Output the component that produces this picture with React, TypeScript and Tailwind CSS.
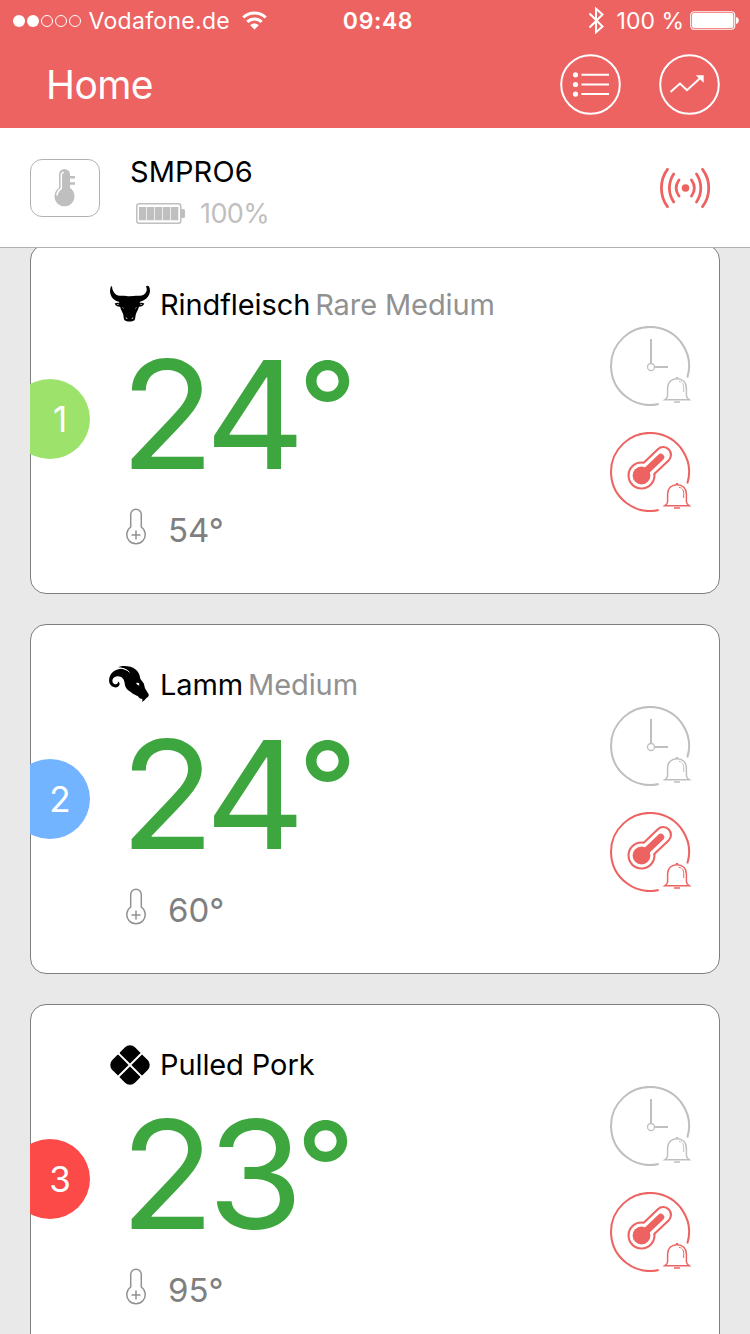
import type { ReactNode } from 'react';

interface Probe {
  channel: number;
  badge: string;
  icon: ReactNode;
  meat: string;
  doneness?: string;
  current: number;
  target: number;
}

function BullIcon() {
  return (
    <svg viewBox="0 0 40 40" className="h-10 w-10">
      <path d="M1.300 2C-.4 5-.5 10 2 13.400c1.800 2.300 4.200 3.600 7 4.300l.3 1.300c-1.600-.3-3.100-.1-4.600.5.900 2.200 2.900 3.400 5.400 3.300.5 2.600 1.900 4.700 2.900 7 .7 2 .4 3.700 1.100 5.700.9 1.500 2.600 2 5.400 2s4.500-.5 5.400-2c.7-2 .4-3.700 1.100-5.700 1-2.300 2.400-4.400 2.900-7 2.500.1 4.500-1.100 5.400-3.300-1.500-.6-3-.8-4.600-.5l.3-1.300c2.800-.7 5.700-2 7.700-4.600 2.600-3.200 2.900-7.800 1.300-10.500-.8-1.200-2.400-1.200-3-.2 1.200 2.600 1 5-.9 7-1.900 2-5 2.500-8.300 2.400-2.400-.1-4.600.5-7.100.5s-5.200-.6-7.300-.5c-3 .1-5.200-.3-7-1.900-2.100-1.900-3.300-4.600-3.300-7.200z" />
      <path d="M6.800 20.600l2.200-.4M32.200 20.600l-2.200-.4M12.500 23.500l1.200 1M26.500 23.500l-1.200 1" stroke="#fff" strokeWidth="0.600" fill="none" />
      <path d="M15.800 33.800l1.500.8M23.200 33.800l-1.500.8" stroke="#fff" strokeWidth="0.900" />
    </svg>
  );
}

function RamIcon() {
  return (
    <svg viewBox="0 0 40 40" className="h-10 w-10 overflow-visible">
      <path d="M8.200 3.300C11 1.800 15.500 1.500 20.500 2.700c4.300 1.200 7.300 4.100 8.700 7.600.8 2 .7 3.600 1.400 4.900l3.200 4.300 1.200 4.800 3.900 6.500c-.2 1.500-1.200 2.700-2.500 3.100l-1.700 2-2.500 2.100.2-2.900c-2-.2-3.300-1.200-4.400-2.900-2.100-.8-4.700-1.900-7.600-4.400-3.300-1.800-5.300-4.300-5.700-8-.2-2.600-1.300-5.500-3.500-6.700-3.600-1.900-7.900-.4-8.700 2.600-.6 2.500 1.100 4.700 3.300 4.600 1.700-.1 2.500-1.400 2-2.700 1.400.4 2.100 1.700 1.700 3.200-.6 2-2.900 3-5.200 2.500C.9 22.500-1.200 19.500-.9 15.800-.5 10 3.900 5.500 9.500 4.900c3.800-.4 7.200.9 9.700 3.200-1.900-2.700-5.700-4.500-11-4.800z" />
      <path d="M8 4.300c4.300-.5 9.200 1 11.500 4" stroke="#fff" strokeWidth="0.900" fill="none" />
      <path d="M26.200 19c1-.6 2.200-.3 2.900.6l.2 1.900c-1.500-.2-2.700-1-3.100-2.500z" fill="#fff" />
    </svg>
  );
}

function PorkIcon() {
  return (
    <svg viewBox="0 0 40 40" className="mt-px h-10 w-10">
      <g transform="rotate(45 20 20)">
        <path d="M19 4H11a7 7 0 0 0-7 7v7q0 1 1 1h14zM21 4h8a7 7 0 0 1 7 7v7q0 1-1 1H21zM19 36h-8a7 7 0 0 1-7-7v-7q0-1 1-1h14zM21 36h8a7 7 0 0 0 7-7v-7q0-1-1-1H21z" />
      </g>
    </svg>
  );
}

function Bell() {
  return (
    <g fill="none" stroke="currentColor">
      <path d="M57.600 69.500v-7.500C57.600 56.500 61.300 52.800 67 52.800s9.400 3.700 9.400 9.200v7.500c0 1.700.9 3 2.700 4.200H54.900c1.800-1.200 2.700-2.500 2.700-4.200z" strokeWidth="1.500" />
      <path d="M65.800 51.700h2.400M64 76h6" strokeWidth="1.500" />
      <path d="M69 55.300c3.100.5 4.700 2.700 4.700 6.200V66" strokeWidth="1" strokeDasharray="2.500 .8 20" />
    </g>
  );
}

const ringPath = 'M48.700 78A39 39 0 1 1 77.300 51.500';

function TimerAlarm() {
  return (
    <svg viewBox="0 0 82 80" className="h-20 w-[82px] text-[#bfbfbf]">
      <path d={ringPath} fill="none" stroke="currentColor" strokeWidth="2" />
      <path d="M41 13v24.500M44.500 41H58" stroke="currentColor" strokeWidth="2" />
      <circle cx="41" cy="41" r="3.500" fill="none" stroke="currentColor" strokeWidth="1.300" />
      <Bell />
    </svg>
  );
}

function TemperatureAlarm() {
  return (
    <svg viewBox="0 0 82 80" className="h-20 w-[82px] text-[#ed6361]">
      <path d={ringPath} fill="none" stroke="currentColor" strokeWidth="2" />
      <g strokeLinecap="round">
        <circle cx="31.500" cy="43.500" r="14" fill="currentColor" />
        <path d="M31.500 43.500L53.200 22.800" stroke="currentColor" strokeWidth="17.600" />
        <circle cx="31.500" cy="43.500" r="11.900" fill="#fff" />
        <path d="M31.500 43.500L53.200 22.800" stroke="#fff" strokeWidth="13.400" />
        <circle cx="31.500" cy="43.500" r="8.900" fill="currentColor" />
        <path d="M31.500 43.500L50.700 25.200" stroke="currentColor" strokeWidth="7" />
      </g>
      <Bell />
    </svg>
  );
}

function TargetIcon() {
  return (
    <svg viewBox="0 0 20 38" className="-mt-1 h-[38px] w-5" fill="none" stroke="#919191">
      <path d="M4.700 19V6.500a5.300 5.300 0 0 1 10.600 0V19a9.200 9.200 0 1 1-10.600 0z" strokeWidth="1.500" />
      <path d="M5.500 27h9M10 22.500v9" strokeWidth="1.500" />
    </svg>
  );
}

const probes: Probe[] = [
  { channel: 1, badge: 'bg-[#9de36b]', icon: <BullIcon />, meat: 'Rindfleisch', doneness: 'Rare Medium', current: 24, target: 54 },
  { channel: 2, badge: 'bg-[#72b4ff]', icon: <RamIcon />, meat: 'Lamm', doneness: 'Medium', current: 24, target: 60 },
  { channel: 3, badge: 'bg-[#fb4a48]', icon: <PorkIcon />, meat: 'Pulled Pork', current: 23, target: 95 },
];

function ProbeCard({ probe }: { probe: Probe }) {
  return (
    <div className="flex h-[350px] shrink-0 rounded-2xl border border-[#7f7f7f] bg-white">
      <div className="-ml-px h-20 w-15 self-center overflow-hidden">
        <div className={`-ml-5 flex h-20 w-20 items-center justify-center rounded-full pt-px pl-5 text-[35px] text-white ${probe.badge}`}>
          {probe.channel}
        </div>
      </div>
      <div className="ml-5 flex flex-col pt-[39px]">
        <div className="flex h-10 items-center text-[29px] whitespace-nowrap">
          {probe.icon}
          <span className="mt-0.5 ml-2.5 tracking-[-0.1px]">{probe.meat}</span>
          {probe.doneness && <span className="mt-0.5 ml-[5px] tracking-[-0.1px] text-[#919191]">{probe.doneness}</span>}
        </div>
        <div className="ml-[10px] h-[180px] origin-left scale-x-[1.035] text-[150px] leading-[181px] tracking-[-7px] text-[#3da63f]">
          {probe.current}
          <span className="inline-block -translate-y-[17px] text-[125px] leading-none font-medium">°</span>
        </div>
        <div className="ml-4 flex h-[50px] items-center text-[33px] text-[#7f7f7f]">
          <TargetIcon />
          <span className="mt-[3px] ml-[22px]">{probe.target}°</span>
        </div>
      </div>
      <div className="mr-[27px] ml-auto flex flex-col gap-[26px] pt-[81px]">
        <TimerAlarm />
        <TemperatureAlarm />
      </div>
    </div>
  );
}

function StatusBar() {
  return (
    <div className="flex h-10 items-center justify-between pt-px text-[23px] text-white">
      <div className="flex w-[300px] items-center pl-[12.500px] whitespace-nowrap">
        <div className="flex gap-[2px]">
          <span className="h-3 w-3 rounded-full bg-white" />
          <span className="h-3 w-3 rounded-full bg-white" />
          <span className="h-3 w-3 rounded-full border border-white" />
          <span className="h-3 w-3 rounded-full border border-white" />
          <span className="h-3 w-3 rounded-full border border-white" />
        </div>
        <span className="mt-0.5 ml-2 tracking-[0.3px]">Vodafone.de</span>
        <svg viewBox="0 0 25 19" className="ml-3 h-[19px] w-[25px] shrink-0" fill="none" stroke="#fff" strokeWidth="3">
          <path d="M1.300 6.500C7.500.4 17.500.4 23.700 6.500M5.300 10.900c4-4 10.400-4 14.400 0" />
          <path d="M12.500 18.500l-4.300-4.200c2.400-2.300 6.200-2.300 8.600 0z" fill="#fff" stroke="none" />
        </svg>
      </div>
      <div className="pt-0.5 pl-1.5 text-center font-semibold tracking-[0.6px]">09:48</div>
      <div className="flex w-[300px] items-center justify-end pr-2.5 whitespace-nowrap">
        <svg viewBox="0 0 17 27" className="h-[27px] w-[17px]" fill="none" stroke="#fff" strokeWidth="2">
          <path d="M1.500 6.500l13 13-6.500 5.800V1.700l6.500 5.800-13 13" />
        </svg>
        <span className="mt-0.5 ml-3">100 %</span>
        <svg viewBox="0 0 50 19" className="ml-1.5 h-[19px] w-[50px]">
          <rect x=".7" y=".7" width="44" height="17.600" rx="3.500" fill="none" stroke="#fff" strokeWidth="1.100" />
          <rect x="2" y="2" width="41.400" height="15" rx="2" fill="#fff" />
          <path d="M46 6q2.800.8 2.800 3.500T46 13z" fill="#fff" />
        </svg>
      </div>
    </div>
  );
}

export default function App() {
  return (
    <div className="flex h-[1334px] w-[750px] flex-col overflow-hidden bg-[#e9e9e9] font-['Inter',sans-serif] text-black">
      <header className="h-32 bg-[#ed6361]">
        <StatusBar />
        <div className="flex h-[88px] items-center pt-px pr-[29px] pl-[46px] text-white">
          <h1 className="mt-px text-[39px] tracking-[-0.6px]">Home</h1>
          <svg viewBox="0.5 0.5 62 62" className="ml-auto h-[62px] w-[62px]" fill="none" stroke="#fff" strokeWidth="2">
            <circle cx="31" cy="31" r="29.300" />
            <path d="M22 21.300h27.500M22 31h27.500M22 40.600h27.500" />
            <path d="M16 21.300h0M16 31h0M16 40.600h0" strokeWidth="5.200" strokeLinecap="round" />
          </svg>
          <svg viewBox="0.5 0.5 62 62" className="ml-[37px] h-[62px] w-[62px]" fill="none" stroke="#fff" strokeWidth="2">
            <circle cx="31" cy="31" r="29.300" />
            <path d="M12 38.500l9.500-8.500 7 6.700 13-12" />
            <path d="M37.200 21.700h8v7.500z" fill="#fff" stroke="none" />
          </svg>
        </div>
      </header>

      <section className="flex h-[120px] shrink-0 items-center border-b border-[#b2b2b2] bg-white pl-[30px]">
        <div className="flex h-[58px] w-[70px] items-center justify-center rounded-xl border border-[#b2b2b2]">
          <svg viewBox="0 0 22 40" className="h-10 w-[22px]">
            <path d="M5 19V6.500a5.500 5.500 0 0 1 11 0V20a10 10 0 1 1-11 0z" fill="#bfbfbf" />
            <path d="M7.300 20.500V6.700a2.500 2.500 0 0 1 2-2.200M7.300 20.500c-2.300 1.500-4 3.500-4.300 6.500" stroke="#fff" strokeWidth="1.500" fill="none" strokeLinecap="round" />
            <path d="M16 9.300h5M16 15.500h5" stroke="#bfbfbf" strokeWidth="2.600" />
          </svg>
        </div>
        <div className="ml-[30px] flex flex-col pt-[9px]">
          <div className="h-[42px] text-[29px] leading-[44px] tracking-[0.1px]">SMPRO6</div>
          <div className="flex h-[42px] items-center pl-1.5 text-[27px] tracking-[-0.6px] text-[#bfbfbf]">
            <svg viewBox="0 0 49 21" className="h-[21px] w-[49px]" fill="#bfbfbf">
              <rect x=".8" y=".8" width="44" height="19.400" rx="2.500" fill="none" stroke="#bfbfbf" strokeWidth="1.500" />
              <path d="M3 4h7.300v13.200H3zM11 4h7.300v13.200H11zM19 4h7.300v13.200H19zM27 4h7.300v13.200H27zM35 4h7.300v13.200H35zM45 6h2.500q1.500 0 1.500 1.500v6q0 1.500-1.500 1.500H45z" />
            </svg>
            <span className="mt-[3px] ml-[15px]">100%</span>
          </div>
        </div>
        <svg viewBox="0 0 52 42" className="mr-[39px] ml-auto h-[42px] w-[52px]" fill="none" stroke="#ed6361" strokeWidth="2.800" strokeLinecap="round">
          <circle cx="26.500" cy="21" r="3.800" fill="#ed6361" stroke="none" />
          <path d="M8.500 2.300C.4 13 .4 29 8.500 39.700M14.700 7c-5.700 8.500-5.700 19.500 0 28M20 13c-3.600 5-3.600 11 0 16" />
          <path d="M43.500 2.300c8.300 10.700 8.300 26.700 0 37.400M37.500 7c5.700 8.500 5.700 19.500 0 28M32.500 13c3.600 5 3.600 11 0 16" />
        </svg>
      </section>

      <main className="min-h-0 flex-1 overflow-hidden">
        <div className="-mt-1 flex flex-col gap-[30px] px-[30px]">
          {probes.map((probe) => (
            <ProbeCard key={probe.channel} probe={probe} />
          ))}
        </div>
      </main>
    </div>
  );
}
